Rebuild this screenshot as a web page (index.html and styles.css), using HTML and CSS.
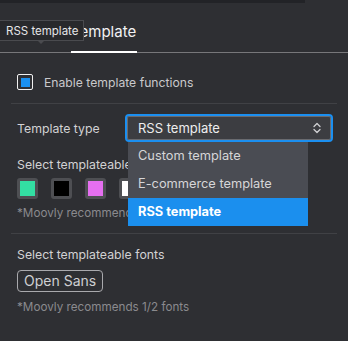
FILE: index.html
```html
<!DOCTYPE html>
<html>
<head>
<meta charset="utf-8">
<link rel="stylesheet" href="styles.css">
</head>
<body>
<div class="panel">
  <div class="topbar"></div>
  <div class="tabs">
    <div class="tab active">Template</div>
    <div class="tooltip">RSS template<span class="arrow"></span></div>
  </div>
  <div class="row check-row">
    <span class="checkbox"><span class="dot"></span></span>
    <span class="check-label">Enable template functions</span>
  </div>
  <hr class="divider">
  <div class="row type-row">
    <span class="label type-label">Template type</span>
    <div class="select-wrap">
      <div class="select">
        <span>RSS template</span>
        <svg class="chev" width="10" height="14" viewBox="0 0 10 14"><path d="M2 5.5 L5 2.5 L8 5.5 M2 8.5 L5 11.5 L8 8.5" fill="none" stroke="#cfcfd2" stroke-width="1.3" stroke-linecap="round" stroke-linejoin="round"/></svg>
      </div>
      <ul class="menu">
        <li>Custom template</li>
        <li>E-commerce template</li>
        <li class="selected">RSS template</li>
      </ul>
    </div>
  </div>
  <div class="block colors">
    <div class="label">Select templateable colors</div>
    <div class="swatches">
      <span class="swatch" style="background:#33dfa3"></span>
      <span class="swatch" style="background:#000000"></span>
      <span class="swatch" style="background:#e56ff0"></span>
      <span class="swatch" style="background:#ffffff"></span>
    </div>
    <div class="note">*Moovly recommends 4/6 colors</div>
  </div>
  <hr class="divider divider2">
  <div class="block fonts">
    <div class="label">Select templateable fonts</div>
    <div class="chips"><span class="chip">Open Sans</span></div>
    <div class="note">*Moovly recommends 1/2 fonts</div>
  </div>
</div>
</body>
</html>
```
FILE: styles.css
```css
html, body {
  margin: 0;
  padding: 0;
  background: #2e2f33;
}
body {
  font-family: Inter, "Noto Sans", sans-serif;
  color: #d4d4d6;
  width: 348px;
  height: 341px;
  overflow: hidden;
}
.panel {
  position: relative;
}
.topbar {
  height: 3px;
  width: 305px;
  background: #222327;
}
.tabs {
  position: relative;
  height: 49px;
  border-bottom: 1px solid #77777a;
  display: flex;
  align-items: flex-end;
  padding-left: 71px;
}
.tab {
  font-size: 15px;
  color: #f2f2f3;
  height: 38px;
  line-height: 34px;
  box-sizing: border-box;
  border-bottom: 2px solid #ffffff;
  padding-right: 1px;
  margin-bottom: -1px;
}
.tooltip {
  position: absolute;
  left: 0;
  top: 17px;
  height: 21px;
  line-height: 20px;
  padding: 0 5px 0 6px;
  box-sizing: border-box;
  background: #28292c;
  border: 1px solid #4a4b4f;
  border-left: none;
  font-size: 11.5px;
  color: #e6e6e8;
  white-space: nowrap;
}
.arrow {
  position: absolute;
  left: 38px;
  top: 20px;
  width: 0;
  height: 0;
  border-left: 3px solid transparent;
  border-right: 3px solid transparent;
  border-top: 3px solid #4a4b4f;
}
.row {
  display: flex;
  align-items: center;
  padding: 0 17px;
}
.check-row {
  margin-top: 21px;
  height: 16px;
}
.checkbox {
  width: 16px;
  height: 16px;
  box-sizing: border-box;
  border: 1px solid #f0f0f0;
  border-radius: 2px;
  display: flex;
  align-items: center;
  justify-content: center;
}
.dot {
  width: 9px;
  height: 9px;
  background: #1a90f0;
}
.check-label {
  margin-left: 11px;
  font-size: 12.2px;
  color: #c9c9cc;
  white-space: nowrap;
}
.divider {
  border: none;
  border-top: 1px solid #404145;
  margin: 13px 11px 0 11px;
  height: 0;
}
.divider2 {
  margin-top: 12px;
}
.type-row {
  margin-top: 10px;
  height: 28px;
}
.label {
  font-size: 12.3px;
  color: #d2d2d4;
  white-space: nowrap;
}
.type-label {
  width: 108px;
  flex: none;
}
.select-wrap {
  position: relative;
}
.select {
  width: 208px;
  height: 28px;
  box-sizing: border-box;
  border: 2px solid #1b8ff0;
  border-radius: 4px;
  background: #3c3d41;
  box-shadow: inset 0 0 0 1px #6a6b6f;
  display: flex;
  align-items: center;
  justify-content: space-between;
  padding: 0 9px 0 11px;
  font-size: 13px;
  color: #ededee;
}
.chev {
  display: block;
}
.menu {
  position: absolute;
  left: 3px;
  top: 28px;
  width: 180px;
  margin: 0;
  padding: 0;
  list-style: none;
  background: #4a4c53;
  z-index: 2;
}
.menu li {
  height: 28px;
  line-height: 28px;
  padding-left: 10px;
  font-size: 12.8px;
  color: #d6d6d8;
  white-space: nowrap;
}
.menu li.selected {
  background: #1b8fee;
  color: #ffffff;
  font-weight: 700;
}
.block {
  padding: 0 17px;
}
.block .label {
  line-height: 16px;
}
.colors .label {
  margin-top: 15px;
}
.fonts .label {
  margin-top: 13px;
}
.swatches {
  display: flex;
  gap: 13px;
  margin-top: 5px;
}
.swatch {
  width: 21px;
  height: 21px;
  box-sizing: border-box;
  border: 3px solid #4e4f53;
  border-radius: 3px;
  background-clip: padding-box;
}
.note {
  font-size: 11.7px;
  line-height: 15px;
  color: #8a8a8e;
  white-space: nowrap;
}
.colors .note {
  margin-top: 7px;
}
.fonts .note {
  margin-top: 8px;
}
.chips {
  display: flex;
  margin-top: 7px;
}
.chip {
  height: 22px;
  line-height: 20px;
  box-sizing: border-box;
  border: 1px solid #a9a9ad;
  border-radius: 4px;
  padding: 0 6px;
  font-size: 14px;
  color: #cfcfd2;
}
```
